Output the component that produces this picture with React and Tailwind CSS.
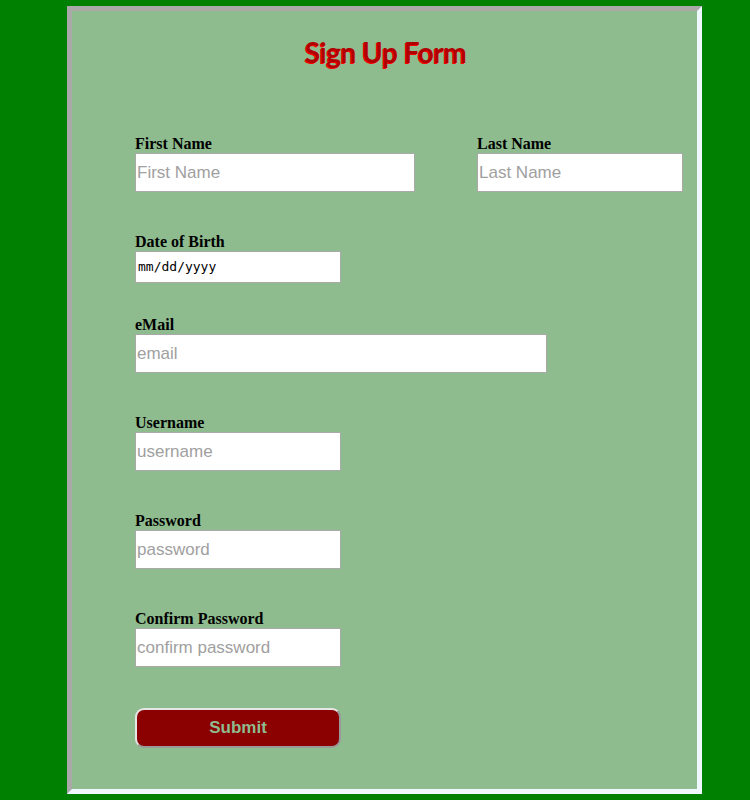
export default function App() {
  const label = "block font-['Liberation_Serif',serif] font-bold text-[16px] leading-[18px] text-black";
  const input =
    "block h-[39px] bg-white border border-[#a9a9a9] px-[1px] font-['Liberation_Sans',Arial,sans-serif] text-[17px] text-black placeholder:text-[#a0a0a0] outline-none";

  return (
    <div className="min-h-[800px] w-[750px] bg-[#008000] pt-[6px] pb-[6px]">
      <div className="ml-[67px] w-[635px] h-[788px] bg-[#8fbc8f] border-[5px] border-t-[#a9a9a9] border-l-[#a9a9a9] border-r-[#f0f8ff] border-b-[#f0f8ff]">
        <h1 className="text-center pt-[23px] pl-[2px] font-['Lato',sans-serif] font-bold text-[28px] leading-[36px] tracking-[-0.5px] text-[#b00000] [text-shadow:-1px_1px_0_#ff0000]">
          Sign Up Form
        </h1>

        <div className="pl-[63px] pt-[65px]">
          <div className="flex">
            <div className="w-[342px]">
              <label className={label}>First Name</label>
              <input className={`${input} w-[280px]`} placeholder="First Name" />
            </div>
            <div>
              <label className={label}>Last Name</label>
              <input className={`${input} w-[206px]`} placeholder="Last Name" />
            </div>
          </div>

          <div className="mt-[41px]">
            <label className={label}>Date of Birth</label>
            <div className="flex items-center h-[32px] w-[206px] bg-white border border-[#a9a9a9] px-[2px] font-['DejaVu_Sans_Mono',monospace] text-[13px] text-black">
              mm/dd/yyyy
            </div>
          </div>

          <div className="mt-[33px]">
            <label className={label}>eMail</label>
            <input className={`${input} w-[412px]`} placeholder="email" />
          </div>

          <div className="mt-[41px]">
            <label className={label}>Username</label>
            <input className={`${input} w-[206px]`} placeholder="username" />
          </div>

          <div className="mt-[41px]">
            <label className={label}>Password</label>
            <input className={`${input} w-[206px]`} placeholder="password" type="password" />
          </div>

          <div className="mt-[41px]">
            <label className={label}>Confirm Password</label>
            <input className={`${input} w-[206px]`} placeholder="confirm password" type="password" />
          </div>

          <button className="mt-[41px] block h-[40px] w-[206px] rounded-[9px] bg-[#8b0000] border-2 border-t-[#e6e6e6] border-l-[#e6e6e6] border-r-[#9a9a9a] border-b-[#9a9a9a] font-['Liberation_Sans',Arial,sans-serif] font-bold text-[17px] text-[#8fbc8f]">
            Submit
          </button>
        </div>
      </div>
    </div>
  );
}
